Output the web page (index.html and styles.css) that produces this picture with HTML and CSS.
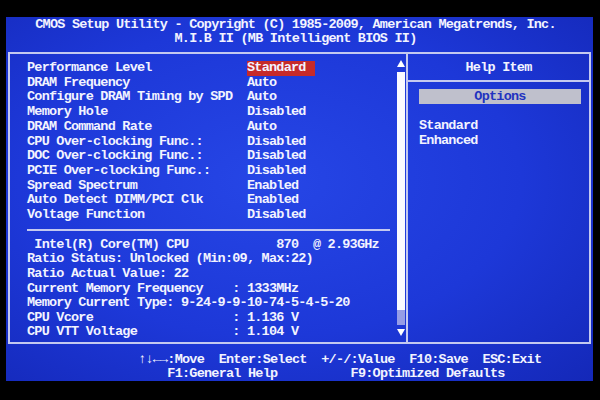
FILE: index.html
```html
<!DOCTYPE html>
<html lang="en">
<head>
<meta charset="UTF-8">
<title>CMOS Setup Utility</title>
<link rel="stylesheet" href="styles.css">
</head>
<body>
<div class="screen">
  <div class="title">CMOS Setup Utility - Copyright (C) 1985-2009, American Megatrends, Inc.<br>M.I.B II (MB Intelligent BIOS II)</div>

  <div class="box">
    <div class="left">
      <div class="main">
        <ul class="settings">
          <li><span class="name">Performance Level</span><span class="val sel">Standard</span></li>
          <li><span class="name">DRAM Frequency</span><span class="val">Auto</span></li>
          <li><span class="name">Configure DRAM Timing by SPD</span><span class="val">Auto</span></li>
          <li><span class="name">Memory Hole</span><span class="val">Disabled</span></li>
          <li><span class="name">DRAM Command Rate</span><span class="val">Auto</span></li>
          <li><span class="name">CPU Over-clocking Func.:</span><span class="val">Disabled</span></li>
          <li><span class="name">DOC Over-clocking Func.:</span><span class="val">Disabled</span></li>
          <li><span class="name">PCIE Over-clocking Func.:</span><span class="val">Disabled</span></li>
          <li><span class="name">Spread Spectrum</span><span class="val">Enabled</span></li>
          <li><span class="name">Auto Detect DIMM/PCI Clk</span><span class="val">Enabled</span></li>
          <li><span class="name">Voltage Function</span><span class="val">Disabled</span></li>
        </ul>
        <div class="sep"></div>
        <ul class="info">
          <li> Intel(R) Core(TM) CPU            870  @ 2.93GHz</li>
          <li>Ratio Status: Unlocked (Min:09, Max:22)</li>
          <li>Ratio Actual Value: 22</li>
          <li>Current Memory Frequency    : 1333MHz</li>
          <li>Memory Current Type: 9-24-9-9-10-74-5-4-5-20</li>
          <li>CPU Vcore                   : 1.136 V</li>
          <li>CPU VTT Voltage             : 1.104 V</li>
        </ul>
      </div>
      <div class="scroll">
        <div class="arrow up"></div>
        <div class="track"></div>
        <div class="thumb"></div>
        <div class="arrow down"></div>
      </div>
    </div>

    <div class="help">
      <div class="help-head">Help Item</div>
      <div class="opt-bar">Options</div>
      <ul class="opts">
        <li>Standard</li>
        <li>Enhanced</li>
      </ul>
    </div>
  </div>

  <div class="footer">↑↓←→:Move  Enter:Select  +/-/:Value  F10:Save  ESC:Exit
    F1:General Help          F9:Optimized Defaults</div>
</div>
</body>
</html>
```

FILE: styles.css
```css
*{
  margin: 0;
  padding: 0;
  list-style: none;
  box-sizing: border-box;
}

body{
  width: 600px;
  height: 400px;
  background: #000;
  padding: 17px 0 0 6px;
  overflow: hidden;
  font-family: "Liberation Mono", "DejaVu Sans Mono", monospace;
  font-size: 13.5px;
  font-weight: bold;
  letter-spacing: -0.77px;
  color: #f2f3ff;
}

.screen{
  width: 587px;
  height: 364px;
  background: radial-gradient(ellipse at 45% 45%, #2646e6 0%, #1d38d8 55%, #1428b8 100%);
  display: flex;
  flex-direction: column;
}

.title{
  padding-top: 1px;
  line-height: 14px;
  text-align: center;
  padding-right: 8px;
  white-space: pre;
}

.box{
  margin: 6px 0 0 2px;
  width: 583px;
  height: 294px;
  border: 2px solid #c4c9f0;
  display: flex;
}

.left{
  width: 398px;
  border-right: 2px solid #c4c9f0;
  display: flex;
}

.main{
  flex: 1;
  padding: 7px 7px 0 17px;
}

.settings li,
.info li,
.opts li{
  line-height: 14.7px;
  white-space: pre;
}

.settings li{
  display: flex;
}

.name{
  width: 220px;
}

.sel{
  display: inline-block;
  width: 68px;
  background: #c62a2a;
}

.sep{
  height: 2px;
  background: #c4c9f0;
  margin: 6px 0 7px;
}

.info li{
  line-height: 14.6px;
}

.scroll{
  width: 8px;
  margin-right: 1px;
  padding-top: 6px;
  display: flex;
  flex-direction: column;
}

.arrow{
  width: 8px;
  height: 7px;
  border-left: 4px solid transparent;
  border-right: 4px solid transparent;
}

.arrow.up{
  border-bottom: 7px solid #fff;
  margin-bottom: 5px;
}

.arrow.down{
  border-top: 7px solid #fff;
  margin-top: 4px;
}

.track{
  height: 238px;
  background: #fbfbff;
}

.thumb{
  height: 15px;
  background: #959ce6;
}

.help{
  flex: 1;
}

.help-head{
  height: 28px;
  line-height: 28px;
  text-align: center;
  border-bottom: 2px solid #c4c9f0;
}

.opt-bar{
  margin: 7px 8px 0 11px;
  height: 15px;
  line-height: 15px;
  background: #bfc0cc;
  color: #2233c0;
  text-align: center;
}

.opts{
  margin: 15px 0 0 11px;
}

.footer{
  margin: 9px 0 0 132px;
  line-height: 14px;
  white-space: pre;
}
```
